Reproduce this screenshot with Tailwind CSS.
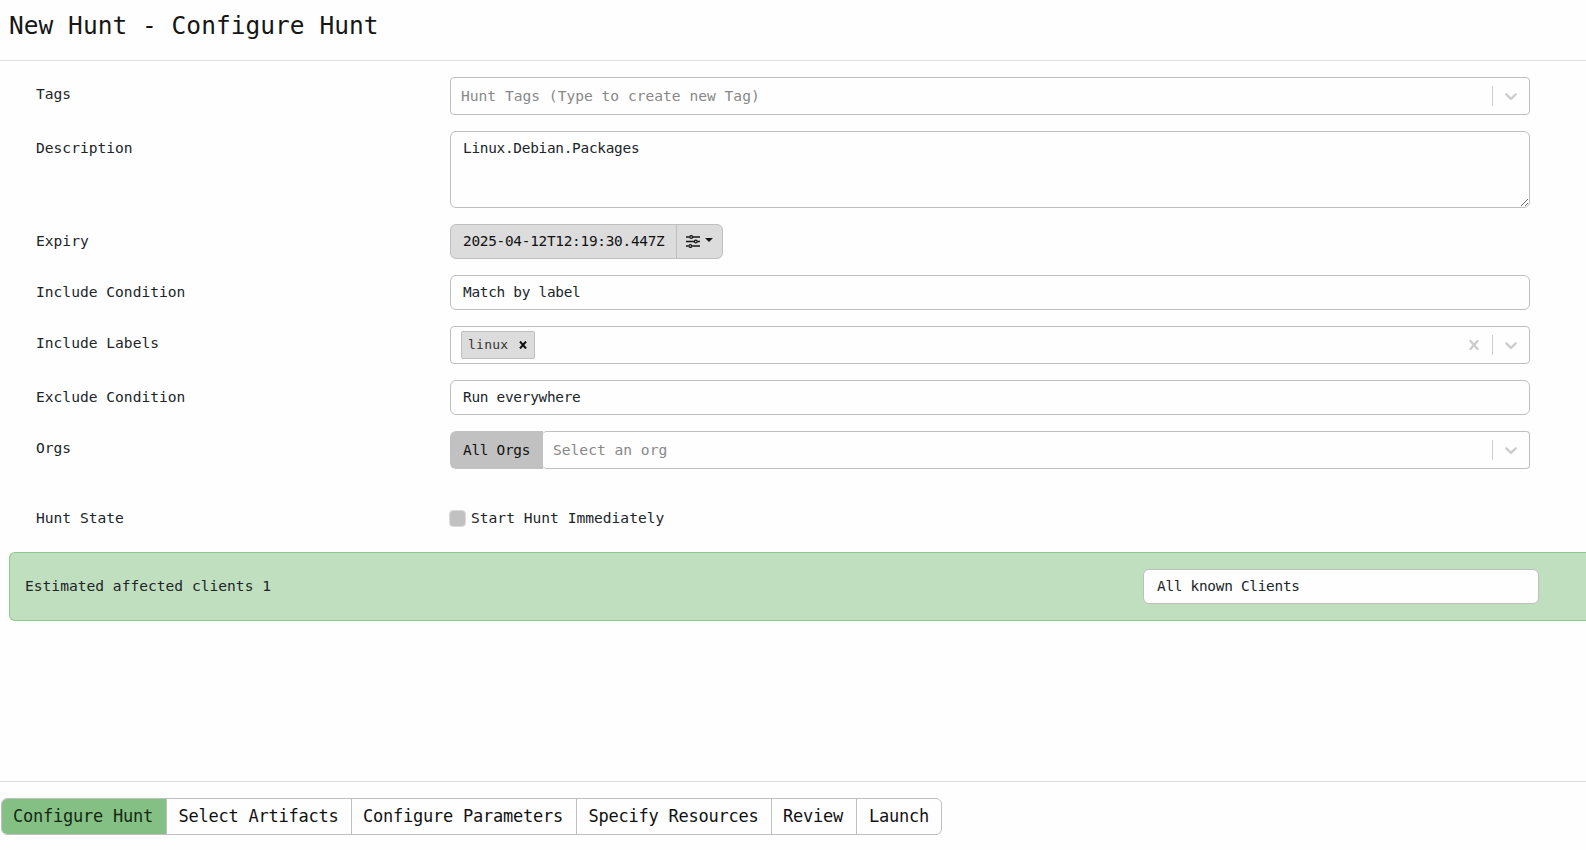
<!DOCTYPE html>
<html lang="en">
<head>
<meta charset="utf-8">
<title>New Hunt - Configure Hunt</title>
<script src="https://cdn.jsdelivr.net/npm/@tailwindcss/browser@4"></script>
</head>
<body class="flex h-[850px] w-[1586px] flex-col overflow-hidden bg-[#fefefe] font-['DejaVu_Sans_Mono',monospace] text-[14.6px] text-[#212529]">
  <header class="flex h-[61px] shrink-0 items-start border-b border-[#dee0e3] pl-[9px] pt-[8px]">
    <h1 class="text-[24.5px] leading-[36px] tracking-[0.03px] whitespace-pre text-[#161616]">New Hunt - Configure Hunt</h1>
  </header>

  <main class="flex grow flex-col">
    <div class="mr-[56px] ml-[36px] mt-4 grid grid-cols-[414px_1fr] gap-y-4 leading-[34px]">
      <div>Tags</div>
      <div class="flex h-[38px] items-center rounded-[4px] border border-[#bfbfbf]">
        <span class="grow pl-[10px] text-[#888]">Hunt Tags (Type to create new Tag)</span>
        <span class="h-5 w-px bg-[#ccc]"></span>
        <svg class="mx-2 size-5 fill-[#ccc]" viewBox="0 0 20 20"><path d="M4.516 7.548c0.436-0.446 1.043-0.481 1.576 0l3.908 3.747 3.908-3.747c0.533-0.481 1.141-0.446 1.574 0 0.436 0.445 0.408 1.197 0 1.615-0.406 0.418-4.695 4.502-4.695 4.502-0.217 0.223-0.502 0.335-0.787 0.335s-0.57-0.112-0.789-0.335c0 0-4.287-4.084-4.695-4.502s-0.436-1.17 0-1.615z"/></svg>
      </div>

      <div>Description</div>
      <textarea class="block h-[77px] w-full resize-y overflow-hidden rounded-[6px] border border-[#bfbfbf] px-3 py-[5px] text-[14.4px] leading-[22px] tracking-[-0.27px]">Linux.Debian.Packages</textarea>

      <div>Expiry</div>
      <div class="flex h-[35px] w-[273px] rounded-[6px] border border-[#bfbfbf] bg-[#dcdcdc] text-[14.4px] leading-[33px] tracking-[-0.27px] text-[#111]">
        <span class="w-[226px] border-r border-[#bfbfbf] pl-3">2025-04-12T12:19:30.447Z</span>
        <span class="flex items-center gap-[5px] pb-px pl-[9px]">
          <svg class="h-[13px] w-[14px] fill-none stroke-[#161616]" viewBox="0 0 14 13" stroke-width="1.7"><path d="M0 2h3.5M7 2h7M0 6.5h8M11.5 6.5h2.5M0 11h2.5M6.2 11h7.8"/><g stroke-width="1.3"><circle cx="5.2" cy="2" r="1.4"/><circle cx="9.8" cy="6.5" r="1.4"/><circle cx="4.4" cy="11" r="1.4"/></g></svg>
          <svg class="mb-[2px] h-1 w-2 fill-[#161616]" viewBox="0 0 8 4"><path d="M0 0h8l-4 4z"/></svg>
        </span>
      </div>

      <div>Include Condition</div>
      <div class="h-[35px] rounded-[6px] border border-[#bfbfbf] px-3 text-[14.4px] leading-[32px] tracking-[-0.27px]">Match by label</div>

      <div>Include Labels</div>
      <div class="flex h-[38px] items-center rounded-[4px] border border-[#bfbfbf]">
        <span class="ml-[10px] flex h-[28px] w-[74px] items-center rounded-[2px] border border-[#bfbfbf] bg-[#dcdcdc] pl-[6px] text-[13px] text-[#333] tracking-[0.25px]">linux
          <svg class="ml-[11px] size-[8px] fill-none stroke-[#111]" viewBox="0 0 8 8" stroke-width="2"><path d="M1 .5l6 7M7 .5l-6 7"/></svg>
        </span>
        <span class="grow"></span>
        <svg class="mx-2 size-5 fill-[#ccc]" viewBox="0 0 20 20"><path d="M14.348 14.849c-0.469 0.469-1.229 0.469-1.697 0l-2.651-3.030-2.651 3.029c-0.469 0.469-1.229 0.469-1.697 0-0.469-0.469-0.469-1.229 0-1.697l2.758-3.15-2.759-3.152c-0.469-0.469-0.469-1.228 0-1.697s1.228-0.469 1.697 0l2.652 3.031 2.651-3.031c0.469-0.469 1.228-0.469 1.697 0s0.469 1.229 0 1.697l-2.758 3.152 2.758 3.15c0.469 0.469 0.469 1.229 0 1.698z"/></svg>
        <span class="h-5 w-px bg-[#ccc]"></span>
        <svg class="mx-2 size-5 fill-[#ccc]" viewBox="0 0 20 20"><path d="M4.516 7.548c0.436-0.446 1.043-0.481 1.576 0l3.908 3.747 3.908-3.747c0.533-0.481 1.141-0.446 1.574 0 0.436 0.445 0.408 1.197 0 1.615-0.406 0.418-4.695 4.502-4.695 4.502-0.217 0.223-0.502 0.335-0.787 0.335s-0.57-0.112-0.789-0.335c0 0-4.287-4.084-4.695-4.502s-0.436-1.17 0-1.615z"/></svg>
      </div>

      <div>Exclude Condition</div>
      <div class="h-[35px] rounded-[6px] border border-[#bfbfbf] px-3 text-[14.4px] leading-[32px] tracking-[-0.27px]">Run everywhere</div>

      <div>Orgs</div>
      <div class="flex h-[38px]">
        <span class="w-[93px] rounded-l-[6px] bg-[#c1c1c1] pl-[13px] text-[14.4px] leading-[38px] tracking-[-0.27px] text-[#111]">All Orgs</span>
        <div class="flex grow items-center rounded-[4px] border border-l-0 border-[#bfbfbf]">
          <span class="grow pl-[10px] text-[#888]">Select an org</span>
          <span class="h-5 w-px bg-[#ccc]"></span>
          <svg class="mx-2 size-5 fill-[#ccc]" viewBox="0 0 20 20"><path d="M4.516 7.548c0.436-0.446 1.043-0.481 1.576 0l3.908 3.747 3.908-3.747c0.533-0.481 1.141-0.446 1.574 0 0.436 0.445 0.408 1.197 0 1.615-0.406 0.418-4.695 4.502-4.695 4.502-0.217 0.223-0.502 0.335-0.787 0.335s-0.57-0.112-0.789-0.335c0 0-4.287-4.084-4.695-4.502s-0.436-1.17 0-1.615z"/></svg>
        </div>
      </div>

      <div class="mt-4">Hunt State</div>
      <div class="-ml-px mt-4 flex h-[34px] items-center">
        <span class="mr-[5px] size-[17px] rounded-[4px] border border-[#dcdcdc] bg-[#c1c1c1]"></span>
        <span>Start Hunt Immediately</span>
      </div>
    </div>

    <div class="mt-[17px] ml-[9px] flex h-[69px] items-center justify-between rounded-l-[6px] border border-r-0 border-[#8aca8e] bg-[#c0dfbf] pr-[47px] pl-[15px]">
      <span class="pb-[2px]">Estimated affected clients 1</span>
      <div class="h-[35px] w-[396px] rounded-[6px] border border-[#bfbfbf] bg-[#fefefe] px-[13px] text-[14.4px] leading-[32px] tracking-[-0.27px]">All known Clients</div>
    </div>
  </main>

  <footer class="flex h-[69px] shrink-0 items-start border-t border-[#dedfe0] pt-4 pl-px">
    <nav class="flex h-[37px] overflow-hidden rounded-[6px] border border-[#bfbfbf] text-[17px] leading-[34px] tracking-[-0.234px] text-[#111]">
      <span class="w-[165px] border-r border-[#bfbfbf] bg-[#84c083] pl-[11px] text-[#142814]">Configure Hunt</span>
      <span class="w-[185px] border-r border-[#bfbfbf] pl-[11.5px]">Select Artifacts</span>
      <span class="w-[225px] border-r border-[#bfbfbf] pl-[11px]">Configure Parameters</span>
      <span class="w-[195px] border-r border-[#bfbfbf] pl-[11.5px]">Specify Resources</span>
      <span class="w-[85px] border-r border-[#bfbfbf] pl-[11px]">Review</span>
      <span class="w-[84px] pl-3">Launch</span>
    </nav>
  </footer>
</body>
</html>
